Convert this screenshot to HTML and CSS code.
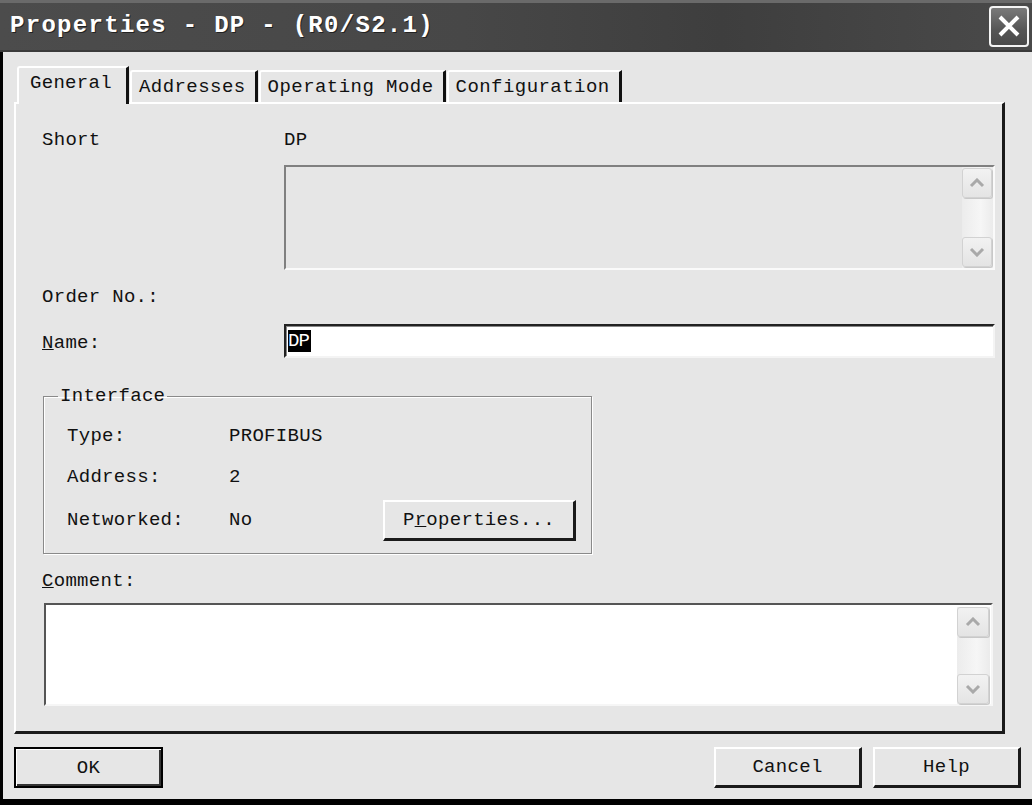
FILE: index.html
```html
<!DOCTYPE html>
<html lang="en">

<head>
    <meta charset="UTF-8">
    <title>Properties - DP - (R0/S2.1)</title>
    <link rel="stylesheet" href="styles.css">
</head>

<body>
    <div class="dialog">
        <div class="titlebar">
            <span class="title">Properties - DP - (R0/S2.1)</span>
            <button class="close-btn" title="Close">
                <svg width="24" height="24" viewBox="0 0 24 24">
                    <path d="M3 3 L21 21 M21 3 L3 21" stroke="#fff" stroke-width="4" fill="none" />
                </svg>
            </button>
        </div>

        <div class="client">
            <div class="tabs">
                <div class="tab active">General</div>
                <div class="tab">Addresses</div>
                <div class="tab">Operating Mode</div>
                <div class="tab">Configuration</div>
            </div>

            <div class="panel">
                <div class="form-grid">
                    <span class="label short-label">Short</span>
                    <span class="value short-label">DP</span>

                    <span></span>
                    <div class="desc-box">
                        <div class="scrollbar">
                            <span class="arrow"><svg width="16" height="10" viewBox="0 0 16 10"><polyline points="2,8 8,2 14,8" /></svg></span>
                            <span class="arrow"><svg width="16" height="10" viewBox="0 0 16 10"><polyline points="2,2 8,8 14,2" /></svg></span>
                        </div>
                    </div>

                    <span class="label order-label">Order No.:</span>
                    <span class="order-label"></span>

                    <span class="label name-label"><u>N</u>ame:</span>
                    <div class="name-input"><span class="selected">DP</span></div>
                </div>

                <fieldset class="group">
                    <legend>Interface</legend>
                    <div class="group-row">
                        <span>Type:</span>
                        <span>PROFIBUS</span>
                    </div>
                    <div class="group-row">
                        <span>Address:</span>
                        <span>2</span>
                    </div>
                    <div class="group-row">
                        <span>Networked:</span>
                        <span>No</span>
                        <button class="btn props-btn">P<u>r</u>operties...</button>
                    </div>
                </fieldset>

                <div class="label comment-label"><u>C</u>omment:</div>
                <div class="comment-box">
                    <div class="scrollbar">
                        <span class="arrow"><svg width="16" height="10" viewBox="0 0 16 10"><polyline points="2,8 8,2 14,8" /></svg></span>
                        <span class="arrow"><svg width="16" height="10" viewBox="0 0 16 10"><polyline points="2,2 8,8 14,2" /></svg></span>
                    </div>
                </div>
            </div>

            <div class="button-bar">
                <button class="btn default-btn">OK</button>
                <div class="right-buttons">
                    <button class="btn">Cancel</button>
                    <button class="btn">Help</button>
                </div>
            </div>
        </div>
    </div>
</body>

</html>
```

FILE: styles.css
```css
* {
    box-sizing: border-box;
}

body {
    margin: 0;
    padding: 0;
    background-color: #e6e6e6;
    font-family: "Liberation Mono", "DejaVu Sans Mono", monospace;
    font-size: 19px;
    letter-spacing: 0.3px;
    color: #111;
}

.dialog {
    width: 1032px;
    height: 805px;
    display: flex;
    flex-direction: column;
    background-color: #e6e6e6;
    border-bottom: 6px solid #000;
    overflow: hidden;
}

/* title bar */
.titlebar {
    height: 52px;
    flex: none;
    display: flex;
    align-items: center;
    justify-content: space-between;
    padding: 0 3px 1px 10px;
    background: linear-gradient(90deg, #4c4c4c 0%, #474747 45%, #3e3e3e 70%, #4a4a4a 100%);
    box-shadow: inset 0 3px 0 #6a6a6a, inset 0 -2px 0 #3a3a3a;
}

.title {
    color: #fff;
    font-weight: bold;
    font-size: 24px;
    letter-spacing: 1.3px;
    text-shadow: 1px 1px 0 #222;
}

.close-btn {
    width: 40px;
    height: 41px;
    padding: 0;
    display: flex;
    align-items: center;
    justify-content: center;
    border: 2px solid #f4f4f4;
    border-radius: 4px;
    background: linear-gradient(#7a7a7a, #555 60%, #4a4a4a);
    margin-top: 1px;
}

/* client area */
.client {
    flex: 1;
    display: flex;
    flex-direction: column;
    border-left: 3px solid #000;
    padding: 0 11px 0 11px;
}

.tabs {
    display: flex;
    align-items: flex-end;
    height: 50px;
    padding-left: 3px;
}

.tab {
    height: 32px;
    line-height: 30px;
    padding: 0 9px 0 7px;
    border-top: 2px solid #fff;
    border-left: 2px solid #fff;
    border-right: 3px solid #111;
    border-top-left-radius: 3px;
    margin-right: 1px;
    letter-spacing: 0.45px;
    white-space: nowrap;
}

.tab.active {
    height: 38px;
    line-height: 30px;
    padding: 0 14px 0 11px;
    margin-right: 1px;
    margin-bottom: -2px;
    letter-spacing: 0.3px;
    position: relative;
    z-index: 1;
    background-color: #e6e6e6;
}

.panel {
    height: 632px;
    margin-right: 16px;
    border-top: 2px solid #fff;
    border-left: 2px solid #fff;
    border-right: 3px solid #1a1a1a;
    border-bottom: 3px solid #1a1a1a;
    padding: 0 7px 0 26px;
}

.form-grid {
    display: grid;
    grid-template-columns: 242px 1fr;
    align-items: center;
}

.label,
.value {
    line-height: 24px;
}

.short-label {
    margin-top: 24px;
}

.desc-box {
    margin-top: 13px;
    height: 105px;
    border-top: 2px solid #808080;
    border-left: 2px solid #808080;
    border-right: 2px solid #fafafa;
    border-bottom: 2px solid #fafafa;
    display: flex;
    justify-content: flex-end;
}

.order-label {
    margin-top: 15px;
    min-height: 24px;
}

.name-label {
    margin-top: 15px;
    padding-top: 4px;
}

.name-input {
    margin-top: 15px;
    height: 34px;
    background-color: #fff;
    border-top: 2px solid #222;
    border-left: 2px solid #222;
    border-right: 2px solid #f4f4f4;
    border-bottom: 2px solid #f4f4f4;
    box-shadow: inset 1px 1px 0 #888;
    padding: 3px 0 0 2px;
    line-height: 24px;
}

.selected {
    background-color: #000;
    color: #fff;
    letter-spacing: -1px;
    padding: 0 2px 0 0;
}

/* scrollbars */
.scrollbar {
    width: 31px;
    display: flex;
    flex-direction: column;
    justify-content: space-between;
    padding: 1px 1px 1px 0;
    background: linear-gradient(90deg, #ececec, #f6f6f6 60%, #ebebeb);
}

.arrow {
    height: 30px;
    display: flex;
    align-items: center;
    justify-content: center;
    border: 1px solid #d2d2d2;
    border-radius: 3px;
    background: linear-gradient(#f2f2f2, #e4e4e4);
    box-shadow: 1px 1px 0 #c8c8c8;
}

.arrow polyline {
    fill: none;
    stroke: #a9a9a9;
    stroke-width: 3;
}

/* interface group */
.group {
    width: 549px;
    margin: 26px 0 0 1px;
    padding: 7px 0 13px 23px;
    border: 1px solid #8a8a8a;
    box-shadow: inset 1px 1px 0 #fff, 1px 1px 0 #fff;
}

.group legend {
    margin-left: -9px;
    padding: 0 2px;
    line-height: 24px;
}

.group-row {
    display: grid;
    grid-template-columns: 162px 154px 193px;
    align-items: center;
    height: 41.5px;
}

.btn {
    font-family: inherit;
    font-size: 19px;
    letter-spacing: 0.3px;
    color: #111;
    background-color: #e6e6e6;
    border-top: 2px solid #fff;
    border-left: 2px solid #fff;
    border-right: 3px solid #1a1a1a;
    border-bottom: 3px solid #1a1a1a;
    border-radius: 0;
    padding: 0;
    height: 41px;
}

.props-btn {
    width: 193px;
    margin-top: 2px;
}

.comment-label {
    margin-top: 15px;
}

.comment-box {
    margin: 10px 2px 0 2px;
    height: 103px;
    background-color: #fff;
    border-top: 2px solid #555;
    border-left: 2px solid #555;
    border-right: 2px solid #f6f6f6;
    border-bottom: 2px solid #f6f6f6;
    display: flex;
    justify-content: flex-end;
    padding: 2px 1px 0 0;
}

.comment-box .scrollbar {
    width: 33px;
    padding: 0 1px 0 0;
}

/* bottom buttons */
.button-bar {
    display: flex;
    justify-content: space-between;
    margin-top: 13px;
}

.button-bar .btn {
    width: 148px;
}

.default-btn {
    width: 149px !important;
    border: 2px solid #000;
    box-shadow: inset 1px 1px 0 #fff, inset -2px -2px 0 #333;
}

.right-buttons {
    display: flex;
    gap: 11px;
}
```
